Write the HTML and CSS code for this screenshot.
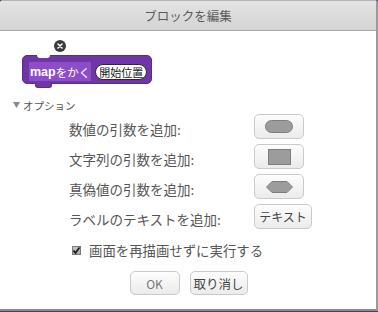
FILE: index.html
```html
<!DOCTYPE html>
<html lang="ja">
<head>
  <meta charset="UTF-8" />
  <title>ブロックを編集</title>
  <link rel="stylesheet" href="styles.css">
</head>
<body>
  <div class="dialog">
    <div class="title">ブロックを編集</div>
    <div class="content">
      <!-- block preview -->
      <div class="preview">
        <div class="block">
          <span class="close">
            <svg width="12" height="12" viewBox="0 0 12 12"><circle cx="6" cy="6" r="6" fill="#3a3a3a"/><path d="M4 4 L8 8 M8 4 L4 8" stroke="#fff" stroke-width="1.6" stroke-linecap="round"/></svg>
          </span>
          <span class="block-label"><b>map</b>をかく</span>
          <span class="block-input">開始位置</span>
        </div>
      </div>

      <!-- options -->
      <div class="options-head">
        <svg width="7" height="6" viewBox="0 0 7 6"><path d="M0 0 H7 L3.5 6 Z" fill="#8a8a8a"/></svg>
        <span>オプション</span>
      </div>
      <div class="option-rows">
        <div class="row">
          <span class="row-label">数値の引数を追加:</span>
          <button class="btn btn-shape"><span class="shape-pill"></span></button>
        </div>
        <div class="row">
          <span class="row-label">文字列の引数を追加:</span>
          <button class="btn btn-shape"><span class="shape-rect"></span></button>
        </div>
        <div class="row">
          <span class="row-label">真偽値の引数を追加:</span>
          <button class="btn btn-shape">
            <svg width="27" height="12" viewBox="0 0 27 12"><polygon points="0.5,6 6,0.5 21,0.5 26.5,6 21,11.5 6,11.5" fill="#9c9c9c" stroke="#7c7c7c"/></svg>
          </button>
        </div>
        <div class="row">
          <span class="row-label">ラベルのテキストを追加:</span>
          <button class="btn btn-text">テキスト</button>
        </div>
      </div>

      <div class="check-row">
        <span class="checkbox">
          <svg width="9" height="9" viewBox="0 0 9 9"><path d="M1.5 4.5 L3.5 7 L7.5 1.5" fill="none" stroke="#111" stroke-width="1.6"/></svg>
        </span>
        <span>画面を再描画せずに実行する</span>
      </div>

      <div class="actions">
        <button class="btn btn-ok">OK</button>
        <button class="btn btn-cancel">取り消し</button>
      </div>
    </div>
  </div>
</body>
</html>
```

FILE: styles.css
```css
body { margin: 0; background: #4b3d66; font-family: "Noto Sans CJK JP", "Liberation Sans", sans-serif; }
.dialog { box-sizing: border-box; width: 378px; height: 311px; background: #fff; border-top: 1px solid #b4b4b4; border-right: 2px solid #9a9a9a; border-bottom: 2px solid #8c8c8c; border-radius: 3px 3px 0 0; overflow: hidden; }
.title { height: 29px; line-height: 29px; text-align: center; font-size: 12.5px; color: #5a5a5a; background: linear-gradient(#e4e4e4, #d3d3d3); border-bottom: 1px solid #a9a9a9; }
.content { color: #555; }

/* block preview */
.preview { padding: 24px 0 0 22px; }
.block { position: relative; display: inline-flex; align-items: center; gap: 4px; box-sizing: border-box; height: 29px; padding: 5px 4px 1px 6px; background: #6f37a5; border: 1px solid #5b2a8a; border-radius: 5px; }
.block::before { content: ""; position: absolute; left: 14px; top: -1px; width: 13px; height: 3px; background: #fff; border-radius: 0 0 3px 3px; }
.block::after { content: ""; position: absolute; left: 12px; bottom: -5px; width: 15px; height: 4px; background: #6f37a5; border: 1px solid #5b2a8a; border-top: none; border-radius: 0 0 3px 3px; }
.close { position: absolute; left: 31px; top: -16px; width: 12px; height: 12px; line-height: 0; }
.block-label { display: inline-flex; align-items: center; height: 19px; padding: 0 1px; background: #8d4dc9; color: #fff; font-size: 11.5px; }
.block-label b { font-family: "Liberation Sans", sans-serif; font-size: 12.5px; }
.block-input { height: 14px; line-height: 14px; padding: 0 3px; background: #fff; border: 1px solid #2b2b2b; border-radius: 8px; font-size: 11px; color: #222; }

/* options */
.options-head { display: flex; align-items: center; gap: 3px; margin: 13px 0 0 13px; height: 16px; font-size: 10.5px; color: #555; }
.option-rows { display: flex; flex-direction: column; gap: 5px; margin-top: 1px; padding-left: 69px; }
.row { display: flex; height: 25px; }
.row-label { width: 185px; padding-top: 5px; line-height: 20px; font-size: 13.5px; }
.btn { box-sizing: border-box; height: 25px; padding: 0; background: linear-gradient(#fdfdfd, #ebebeb); border: 1px solid #cacaca; border-radius: 5px; font-family: inherit; color: #444; }
.btn-shape { display: flex; align-items: center; justify-content: center; width: 50px; }
.btn-text { width: 58px; font-size: 12px; }
.shape-pill { width: 26px; height: 11px; background: #9c9c9c; border: 1px solid #7e7e7e; border-radius: 7px; }
.shape-rect { width: 21px; height: 14px; background: #9c9c9c; border: 1px solid #7e7e7e; }

/* run without refresh */
.check-row { display: flex; align-items: center; gap: 8px; height: 18px; margin: 12px 0 0 72px; font-size: 13.4px; }
.checkbox { box-sizing: border-box; width: 9px; height: 9px; line-height: 0; background: linear-gradient(#c4c4c4, #a8a8a8); border: 1px solid #7a7a7a; }
.checkbox svg { margin: -1px 0 0 -1px; }

.actions { display: flex; justify-content: center; gap: 10px; margin-top: 12px; padding-left: 1px; }
.btn-ok { width: 50px; height: 24px; font-size: 12px; color: #777; }
.btn-cancel { width: 58px; height: 24px; font-size: 12.5px; color: #444; }
```
